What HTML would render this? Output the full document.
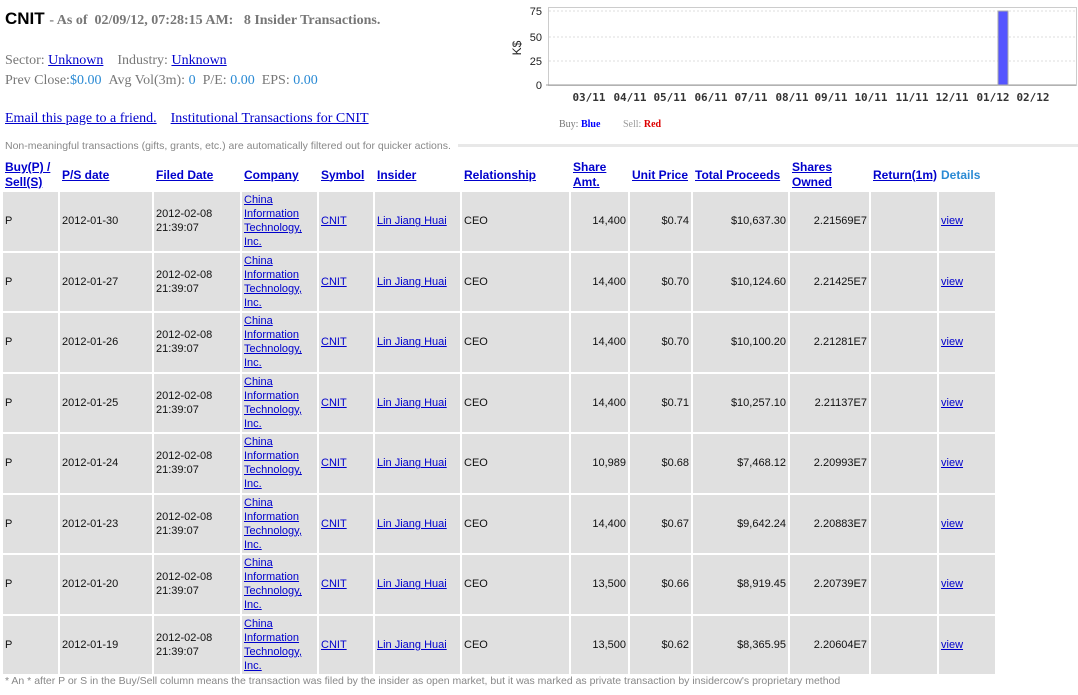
<!DOCTYPE html>
<html><head><meta charset="utf-8"><style>
body{margin:0;background:#fff;width:1078px;height:695px;overflow:hidden;position:relative;font-family:"Liberation Sans",Arial,sans-serif;}
.a{position:absolute;white-space:nowrap}
a{color:#00c;text-decoration:underline}
.ser{font-family:"Liberation Serif",serif}
table{position:absolute;left:1px;top:158px;border-spacing:2px;table-layout:fixed;font-size:11px;color:#111}
td{background:#e0e0e0;padding:0 0 0 2px;height:58.5px;vertical-align:middle;line-height:14px;overflow:hidden}
th{background:#fff;font-size:12px;font-weight:bold;text-align:left;padding:0 0 0 2px;height:29px;line-height:15px;vertical-align:middle}
th a{color:#00c}
td.r{text-align:right;padding:0 2px 0 0}
</style></head><body>
<div class="a" style="left:5px;top:9px;font-size:17px;font-weight:bold;color:#000">CNIT <span class="ser" style="font-size:14px;color:#777">- As of &nbsp;02/09/12, 07:28:15 AM: &nbsp;&nbsp;8 Insider Transactions.</span></div>
<div class="a ser" style="left:5px;top:53px;font-size:14px;color:#777">Sector: <a>Unknown</a> &nbsp;&nbsp;&nbsp;Industry: <a>Unknown</a></div>
<div class="a ser" style="left:5px;top:73px;font-size:14px;color:#777">Prev Close:<span style="color:#2a8ad4">$0.00</span> &nbsp;Avg Vol(3m): <span style="color:#2a8ad4">0</span> &nbsp;P/E: <span style="color:#2a8ad4">0.00</span> &nbsp;EPS: <span style="color:#2a8ad4">0.00</span></div>
<div class="a ser" style="left:5px;top:111px;font-size:14px"><a>Email this page to a friend.</a> &nbsp;&nbsp;&nbsp;<a>Institutional Transactions for CNIT</a></div>
<div class="a" style="left:5px;top:140px;font-size:10.5px;color:#888">Non-meaningful transactions (gifts, grants, etc.) are automatically filtered out for quicker actions.</div>
<div class="a" style="left:458px;top:144px;width:620px;height:3px;background:#e8e8e8"></div>
<svg class="a" style="left:500px;top:0" width="578" height="135">
<rect x="48.5" y="7.5" width="528" height="78" fill="#fff" stroke="#ccc"/>
<g stroke="#ddd" stroke-dasharray="2,2"><line x1="49" x2="576" y1="11" y2="11"/><line x1="49" x2="576" y1="37" y2="37"/><line x1="49" x2="576" y1="61" y2="61"/></g>
<line x1="46" x2="576" y1="85" y2="85" stroke="#999"/>
<g font-size="11" font-family="Liberation Sans,sans-serif" fill="#222" text-anchor="end"><text x="42" y="15">75</text><text x="42" y="41">50</text><text x="42" y="65">25</text><text x="42" y="89">0</text></g>
<text transform="translate(21,48) rotate(-90)" font-size="12" font-family="Liberation Sans,sans-serif" text-anchor="middle" fill="#222">K$</text>
<rect x="498" y="11" width="10" height="74" fill="#5555ff" stroke="#aaa"/>
<g font-size="11" font-weight="bold" font-family="DejaVu Sans Mono,monospace" fill="#333" text-anchor="middle"><text x="89" y="101">03/11</text><text x="130" y="101">04/11</text><text x="170" y="101">05/11</text><text x="211" y="101">06/11</text><text x="251" y="101">07/11</text><text x="292" y="101">08/11</text><text x="331" y="101">09/11</text><text x="371" y="101">10/11</text><text x="412" y="101">11/11</text><text x="452" y="101">12/11</text><text x="493" y="101">01/12</text><text x="533" y="101">02/12</text></g>
<g font-family="Liberation Serif,serif" font-size="10"><text x="59" y="127" fill="#777">Buy: <tspan fill="#00f" font-weight="bold">Blue</tspan></text><text x="123" y="127" fill="#999">Sell: <tspan fill="#d00" font-weight="bold">Red</tspan></text></g>
</svg>
<table>
<colgroup><col style="width:55px"><col style="width:92px"><col style="width:86px"><col style="width:75px"><col style="width:54px"><col style="width:85px"><col style="width:107px"><col style="width:57px"><col style="width:61px"><col style="width:95px"><col style="width:79px"><col style="width:65px"><col style="width:56px"></colgroup>
<tr><th><a>Buy(P) / Sell(S)</a></th><th><a>P/S date</a></th><th><a>Filed Date</a></th><th><a>Company</a></th><th><a>Symbol</a></th><th><a>Insider</a></th><th><a>Relationship</a></th><th><a>Share Amt.</a></th><th><a>Unit Price</a></th><th><a>Total Proceeds</a></th><th><a>Shares Owned</a></th><th><a>Return(1m)</a></th><th style="color:#2a8ad4">Details</th></tr>
<tr><td>P</td><td>2012-01-30</td><td>2012-02-08<br>21:39:07</td><td><a>China Information Technology, Inc.</a></td><td><a>CNIT</a></td><td><a>Lin Jiang Huai</a></td><td>CEO</td><td class="r">14,400</td><td class="r">$0.74</td><td class="r">$10,637.30</td><td class="r">2.21569E7</td><td></td><td><a>view</a></td></tr>
<tr><td>P</td><td>2012-01-27</td><td>2012-02-08<br>21:39:07</td><td><a>China Information Technology, Inc.</a></td><td><a>CNIT</a></td><td><a>Lin Jiang Huai</a></td><td>CEO</td><td class="r">14,400</td><td class="r">$0.70</td><td class="r">$10,124.60</td><td class="r">2.21425E7</td><td></td><td><a>view</a></td></tr>
<tr><td>P</td><td>2012-01-26</td><td>2012-02-08<br>21:39:07</td><td><a>China Information Technology, Inc.</a></td><td><a>CNIT</a></td><td><a>Lin Jiang Huai</a></td><td>CEO</td><td class="r">14,400</td><td class="r">$0.70</td><td class="r">$10,100.20</td><td class="r">2.21281E7</td><td></td><td><a>view</a></td></tr>
<tr><td>P</td><td>2012-01-25</td><td>2012-02-08<br>21:39:07</td><td><a>China Information Technology, Inc.</a></td><td><a>CNIT</a></td><td><a>Lin Jiang Huai</a></td><td>CEO</td><td class="r">14,400</td><td class="r">$0.71</td><td class="r">$10,257.10</td><td class="r">2.21137E7</td><td></td><td><a>view</a></td></tr>
<tr><td>P</td><td>2012-01-24</td><td>2012-02-08<br>21:39:07</td><td><a>China Information Technology, Inc.</a></td><td><a>CNIT</a></td><td><a>Lin Jiang Huai</a></td><td>CEO</td><td class="r">10,989</td><td class="r">$0.68</td><td class="r">$7,468.12</td><td class="r">2.20993E7</td><td></td><td><a>view</a></td></tr>
<tr><td>P</td><td>2012-01-23</td><td>2012-02-08<br>21:39:07</td><td><a>China Information Technology, Inc.</a></td><td><a>CNIT</a></td><td><a>Lin Jiang Huai</a></td><td>CEO</td><td class="r">14,400</td><td class="r">$0.67</td><td class="r">$9,642.24</td><td class="r">2.20883E7</td><td></td><td><a>view</a></td></tr>
<tr><td>P</td><td>2012-01-20</td><td>2012-02-08<br>21:39:07</td><td><a>China Information Technology, Inc.</a></td><td><a>CNIT</a></td><td><a>Lin Jiang Huai</a></td><td>CEO</td><td class="r">13,500</td><td class="r">$0.66</td><td class="r">$8,919.45</td><td class="r">2.20739E7</td><td></td><td><a>view</a></td></tr>
<tr><td>P</td><td>2012-01-19</td><td>2012-02-08<br>21:39:07</td><td><a>China Information Technology, Inc.</a></td><td><a>CNIT</a></td><td><a>Lin Jiang Huai</a></td><td>CEO</td><td class="r">13,500</td><td class="r">$0.62</td><td class="r">$8,365.95</td><td class="r">2.20604E7</td><td></td><td><a>view</a></td></tr>
</table>
<div class="a" style="left:5px;top:675px;font-size:10.5px;color:#888">* An * after P or S in the Buy/Sell column means the transaction was filed by the insider as open market, but it was marked as private transaction by insidercow's proprietary method</div>
</body></html>
